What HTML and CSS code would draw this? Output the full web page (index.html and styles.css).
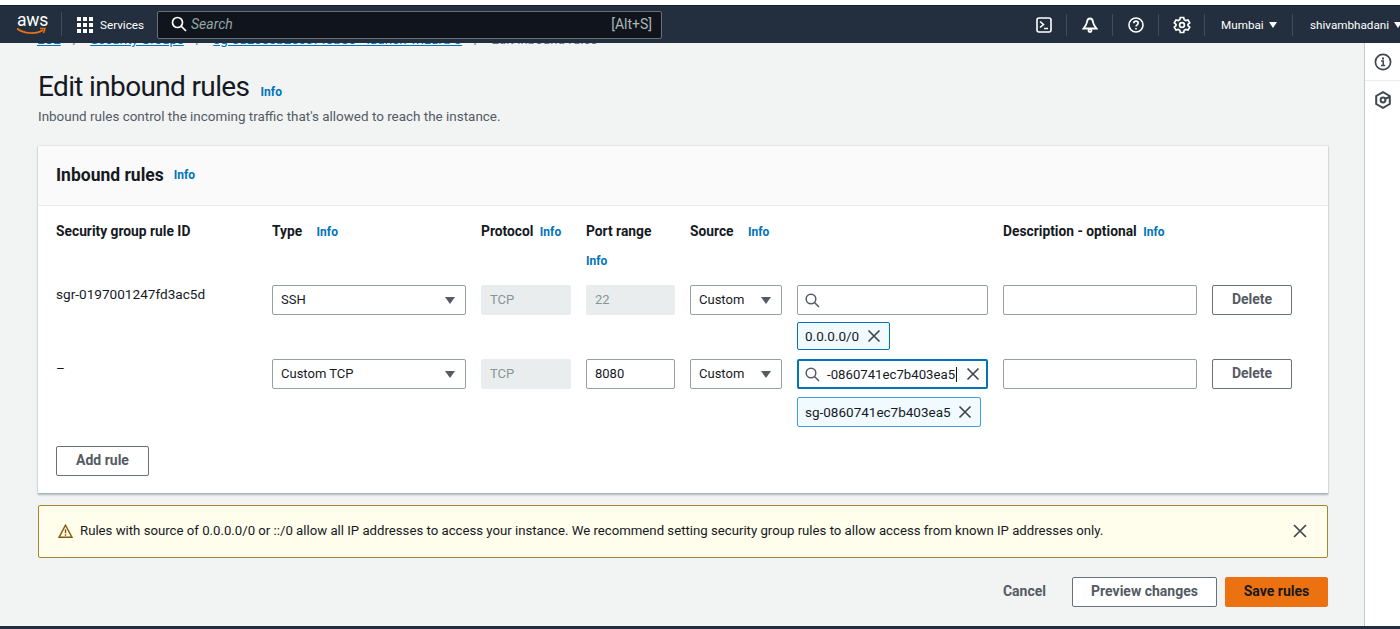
FILE: index.html
```html
<!DOCTYPE html>
<html lang="en">
<head>
    <meta charset="UTF-8">
    <meta name="viewport" content="width=device-width, initial-scale=1.0">
    <title>Edit inbound rules</title>
    <link rel="stylesheet" href="styles.css">
</head>
<body>

    <div class="top-strip"></div>

    <nav class="navbar">
        <a class="logo">
            <span class="logo-text">aws</span>
            <svg class="logo-smile" width="30" height="9" viewBox="0 0 30 9"><path d="M1 1.5C8 7 20 7.5 27 3" fill="none" stroke="#ec7211" stroke-width="1.7"/><path d="M24 1.5 29 1.5 27.5 6" fill="none" stroke="#ec7211" stroke-width="1.5"/></svg>
        </a>
        <a class="services">
            <svg width="16" height="16" viewBox="0 0 16 16" fill="#fff"><rect width="4" height="4"/><rect x="6" width="4" height="4"/><rect x="12" width="4" height="4"/><rect y="6" width="4" height="4"/><rect x="6" y="6" width="4" height="4"/><rect x="12" y="6" width="4" height="4"/><rect y="12" width="4" height="4"/><rect x="6" y="12" width="4" height="4"/><rect x="12" y="12" width="4" height="4"/></svg>
            Services
        </a>
        <div class="nav-search">
            <svg width="16" height="16" viewBox="0 0 16 16" fill="none" stroke="#fff" stroke-width="1.7"><circle cx="6.5" cy="6.5" r="5"/><path d="M10 10l5 5"/></svg>
            <span class="nav-search-text">Search</span>
            <span class="nav-search-key">[Alt+S]</span>
        </div>

        <div class="nav-right">
            <a class="nav-icon">
                <svg width="16" height="16" viewBox="0 0 16 16" fill="none" stroke="#fff" stroke-width="1.6"><rect x="1" y="1" width="14" height="14" rx="2"/><path d="M4 4.5 7.5 7.5 4 10.5M8 11.5h4"/></svg>
            </a>
            <a class="nav-icon">
                <svg width="16" height="16" viewBox="0 0 16 16" fill="none" stroke="#fff" stroke-width="1.8"><path d="M8 1.5C6 1.5 5.2 3.2 5 5 4.6 8 3 9.5 1.5 11.5h13C13 9.5 11.4 8 11 5 10.8 3.2 10 1.5 8 1.5Z"/><circle cx="8" cy="13.5" r="1.5"/></svg>
            </a>
            <a class="nav-icon">
                <svg width="16" height="16" viewBox="0 0 16 16" fill="none" stroke="#fff" stroke-width="1.6"><circle cx="8" cy="8" r="7"/><path d="M5.8 6.2C5.8 3.4 10.2 3.6 10.2 6c0 1.8-2.2 1.8-2.2 3.6"/><path d="M8 11v1.6"/></svg>
            </a>
            <a class="nav-icon">
                <svg width="18" height="18" viewBox="0 0 18 18" fill="none" stroke="#fff" stroke-width="1.7"><path d="M7.3 1.5h3.4l.5 2.2 1.6.9 2.2-.7 1.7 3-1.7 1.5v1.2l1.7 1.5-1.7 3-2.2-.7-1.6.9-.5 2.2H7.3l-.5-2.2-1.6-.9-2.2.7-1.7-3 1.7-1.5V8.4L1.3 6.9l1.7-3 2.2.7 1.6-.9Z"/><circle cx="9" cy="9" r="2.4"/></svg>
            </a>
            <a class="nav-menu nav-region">Mumbai <i class="caret-white"></i></a>
            <a class="nav-menu nav-user">shivambhadani <i class="caret-white"></i></a>
        </div>
    </nav>

    <div class="layout">
        <main class="content">

            <div class="breadcrumb">
                <a>EC2</a><span>/</span>
                <a>Security Groups</a><span>/</span>
                <a class="crumb-group">sg-0a2c5cb2ce3f40b5c - launch-wizard-3</a><span>/</span>
                <em>Edit inbound rules</em>
            </div>

            <h1 class="page-title">Edit inbound rules <a class="info">Info</a></h1>
            <p class="page-desc">Inbound rules control the incoming traffic that's allowed to reach the instance.</p>

            <section class="panel">
                <div class="panel-head">
                    <h2>Inbound rules</h2> <a class="info">Info</a>
                </div>

                <div class="panel-body">

                    <div class="rule-row rule-labels">
                        <div>Security group rule ID</div>
                        <div>Type <a class="info info-wide">Info</a></div>
                        <div>Protocol <a class="info">Info</a></div>
                        <div>Port range <a class="info info-block">Info</a></div>
                        <div>Source <a class="info info-wide">Info</a></div>
                        <div></div>
                        <div class="desc-label">Description - optional <a class="info">Info</a></div>
                        <div></div>
                    </div>

                    <div class="rule-row">
                        <div class="rule-id">sgr-0197001247fd3ac5d</div>
                        <div class="select">SSH <i class="caret"></i></div>
                        <div class="field disabled">TCP</div>
                        <div class="field disabled">22</div>
                        <div class="select">Custom <i class="caret"></i></div>
                        <div>
                            <div class="field search-field">
                                <svg class="search-icon" width="15" height="15" viewBox="0 0 15 15" fill="none" stroke="#545b64" stroke-width="1.5"><circle cx="6" cy="6" r="4.8"/><path d="M9.5 9.5l4.5 4.5"/></svg>
                            </div>
                            <div class="chip chip-first">0.0.0.0/0
                                <svg width="14" height="14" viewBox="0 0 14 14" fill="none" stroke="#414750" stroke-width="1.7"><path d="M1.5 1.5l11 11M12.5 1.5l-11 11"/></svg>
                            </div>
                        </div>
                        <div class="field"></div>
                        <button class="btn">Delete</button>
                    </div>

                    <div class="rule-row">
                        <div class="rule-id">–</div>
                        <div class="select">Custom TCP <i class="caret"></i></div>
                        <div class="field disabled">TCP</div>
                        <div class="field">8080</div>
                        <div class="select">Custom <i class="caret"></i></div>
                        <div>
                            <div class="field search-field focused">
                                <svg class="search-icon" width="15" height="15" viewBox="0 0 15 15" fill="none" stroke="#545b64" stroke-width="1.5"><circle cx="6" cy="6" r="4.8"/><path d="M9.5 9.5l4.5 4.5"/></svg>
                                <span class="typed">-0860741ec7b403ea5</span>
                                <svg class="clear-icon" width="14" height="14" viewBox="0 0 14 14" fill="none" stroke="#414750" stroke-width="1.7"><path d="M1.5 1.5l11 11M12.5 1.5l-11 11"/></svg>
                            </div>
                            <div class="chip chip-second">sg-0860741ec7b403ea5
                                <svg width="14" height="14" viewBox="0 0 14 14" fill="none" stroke="#414750" stroke-width="1.7"><path d="M1.5 1.5l11 11M12.5 1.5l-11 11"/></svg>
                            </div>
                        </div>
                        <div class="field"></div>
                        <button class="btn">Delete</button>
                    </div>

                    <button class="btn btn-add">Add rule</button>
                </div>
            </section>

            <div class="warning">
                <svg width="15" height="16" viewBox="0 0 16 16" fill="none" stroke="#8a5a0b" stroke-width="1.5"><path d="M8 1.8 1.2 14.6h13.6Z"/><path d="M8 6v4.5M8 11.5v1.6"/></svg>
                <span class="warning-text">Rules with source of 0.0.0.0/0 or ::/0 allow all IP addresses to access your instance. We recommend setting security group rules to allow access from known IP addresses only.</span>
                <svg class="warning-close" width="14" height="14" viewBox="0 0 14 14" fill="none" stroke="#414750" stroke-width="1.7"><path d="M1 1l12 12M13 1 1 13"/></svg>
            </div>

            <div class="actions">
                <a class="cancel">Cancel</a>
                <button class="btn btn-preview">Preview changes</button>
                <button class="btn btn-save">Save rules</button>
            </div>

        </main>

        <aside class="side-rail">
            <div class="rail-item">
                <svg width="18" height="18" viewBox="0 0 18 18" fill="none" stroke="#414750" stroke-width="1.7"><circle cx="9" cy="9" r="7.6"/><path d="M7 8h2.2v4.5M7 12.6h4.2" stroke-width="1.5"/><path d="M9 4.6v1.8" stroke-width="2"/></svg>
            </div>
            <div class="rail-item">
                <svg width="16" height="18" viewBox="0 0 16 18" fill="none" stroke="#414750" stroke-width="2"><path d="M8 1.2 14.8 5v8L8 16.8 1.2 13V5Z"/><circle cx="8" cy="9" r="2.4"/><path d="M9.5 8l5-2"/></svg>
            </div>
        </aside>
    </div>

    <div class="bottom-bar"></div>

</body>
</html>
```

FILE: styles.css
```css
* {
    box-sizing: border-box;
}

body {
    margin: 0;
    height: 629px;
    overflow: hidden;
    display: flex;
    flex-direction: column;
    background: #f2f3f3;
    color: #16191f;
    font-family: Roboto, "Liberation Sans", sans-serif;
    font-size: 14px;
    line-height: 18px;
}

button {
    font-family: inherit;
}

.top-strip {
    height: 5px;
    background: #fff;
}

/* top navigation */

.navbar {
    position: relative;
    z-index: 2;
    height: 38px;
    flex: none;
    display: flex;
    align-items: center;
    background: #232f3e;
    border-top: 1px solid #16202c;
    color: #fff;
    font-size: 11.7px;
}

.logo {
    width: 62px;
    height: 24px;
    margin-top: -1px;
    padding-left: 17px;
    position: relative;
    border-right: 1px solid #414c5a;
}

.logo-text {
    display: block;
    font-size: 17.5px;
    line-height: 17px;
    letter-spacing: -0.2px;
}

.logo-smile {
    position: absolute;
    left: 16px;
    top: 15px;
}

.services {
    display: flex;
    align-items: center;
    gap: 7px;
    margin-left: 15px;
    width: 80px;
}

.nav-search {
    width: 505px;
    height: 28px;
    display: flex;
    align-items: center;
    padding: 0 9px 1px 13px;
    background: #10151d;
    border: 1px solid #687078;
    border-radius: 2px;
}

.nav-search-text {
    margin-left: 4px;
    font-size: 14px;
    font-style: italic;
    color: #95a5a6;
}

.nav-search-key {
    margin-left: auto;
    font-size: 14px;
    color: #aab7b8;
}

.nav-right {
    margin-left: auto;
    display: flex;
    align-items: center;
}

.nav-icon {
    width: 46px;
    height: 22px;
    display: flex;
    align-items: center;
    justify-content: center;
    border-right: 1px solid #414c5a;
}

.nav-menu {
    height: 22px;
    display: flex;
    align-items: center;
    gap: 5px;
}

.nav-region {
    width: 88px;
    padding-left: 16px;
    border-right: 1px solid #414c5a;
}

.nav-user {
    width: 107px;
    padding-left: 17px;
}

.caret-white {
    width: 0;
    height: 0;
    border-left: 4.5px solid transparent;
    border-right: 4.5px solid transparent;
    border-top: 6px solid #fff;
}

/* page layout */

.layout {
    flex: 1;
    display: flex;
    min-height: 0;
}

.content {
    width: 1364px;
    padding: 0 36px 0 38px;
}

.side-rail {
    width: 36px;
    background: #fff;
    border-left: 1px solid #c5cbcc;
}

.rail-item {
    display: flex;
    justify-content: center;
    padding-top: 10px;
    height: 38px;
    border-bottom: 1px solid #eaeded;
}

.rail-item + .rail-item {
    border-bottom: 0;
    padding-top: 10px;
}

.bottom-bar {
    height: 3px;
    flex: none;
    background: #232f3e;
}

.breadcrumb {
    height: 18px;
    margin-top: -12px;
    margin-left: -1px;
    display: flex;
    align-items: center;
    white-space: nowrap;
    font-size: 13.3px;
}

.breadcrumb a {
    color: #0073bb;
    text-decoration: underline;
}

.breadcrumb span {
    margin: 0 12px;
    color: #687078;
}

.breadcrumb .crumb-group {
    letter-spacing: 0.15px;
}

.breadcrumb em {
    font-style: normal;
    color: #687078;
}

.page-title {
    margin: 20px 0 0;
    font-size: 28px;
    font-weight: 400;
    line-height: 36px;
    letter-spacing: -0.65px;
}

.page-desc {
    margin: -2px 0 0;
    color: #545b64;
    font-size: 13.45px;
    line-height: 18px;
}

.info {
    color: #0073bb;
    font-size: 12px;
    font-weight: 700;
    letter-spacing: 0;
    margin-left: 3px;
}

.page-title .info {
    margin-left: 5px;
}

.info-wide {
    margin-left: 11px;
}

.info-block {
    display: block;
    margin: 12px 0 0;
}

/* rules panel */

.panel {
    margin-top: 20px;
    height: 348px;
    background: #fff;
    border-bottom: 1px solid #aab7b8;
    box-shadow: 0 1px 2px rgba(0, 28, 36, .25), 0 0 1px rgba(0, 28, 36, .25);
}

.panel-head {
    height: 60px;
    display: flex;
    align-items: center;
    padding: 0 0 2px 18px;
    gap: 7px;
    background: #fafafa;
    border-bottom: 1px solid #eaeded;
}

.panel-head h2 {
    margin: 0;
    font-size: 17.5px;
    font-weight: 700;
}

.panel-body {
    padding: 16px 18px 0;
}

.rule-row {
    display: grid;
    grid-template-columns: 201px 194px 90px 89px 92px 191px 194px 80px;
    column-gap: 15px;
    margin-bottom: 9px;
    align-items: start;
}

.rule-labels {
    height: 63px;
    margin-bottom: 0;
    font-size: 13.8px;
    font-weight: 700;
}

.desc-label {
    white-space: nowrap;
}

.rule-id {
    font-size: 13.6px;
}

/* form controls */

.select,
.field {
    height: 30px;
    display: flex;
    align-items: center;
    padding: 0 8px;
    background: #fff;
    border: 1px solid #95a0a1;
    border-radius: 2px;
    font-size: 13px;
}

.select {
    justify-content: space-between;
    padding-right: 10px;
}

.caret {
    width: 0;
    height: 0;
    border-left: 5px solid transparent;
    border-right: 5px solid transparent;
    border-top: 7px solid #545b64;
}

.disabled {
    background: #eaeded;
    border-color: #eaeded;
    color: #879596;
}

.search-field {
    padding: 0 7px;
}

.focused {
    border: 2px solid #0073bb;
    padding: 0 6px;
    font-size: 13.2px;
}

.typed {
    margin-left: 7px;
    padding-right: 1px;
    border-right: 1px solid #16191f;
    line-height: 15px;
}

.clear-icon {
    margin-left: auto;
}

.chip {
    margin-top: 7px;
    display: flex;
    align-items: center;
    justify-content: space-between;
    padding: 0 8px 0 7px;
    background: #f1faff;
    border: 1px solid #0073bb;
    border-radius: 2px;
    font-size: 13.5px;
}

.chip-first {
    width: 93px;
    height: 28px;
}

.chip-second {
    width: 184px;
    height: 30px;
    margin-top: 8px;
    border-color: #44a0dc;
}

.btn {
    height: 30px;
    padding: 0 0 2px;
    background: #fff;
    border: 1px solid #687078;
    border-radius: 2px;
    color: #545b64;
    font-size: 14px;
    font-weight: 700;
}

.btn-add {
    display: block;
    width: 93px;
    margin-top: 19px;
}

/* warning + footer actions */

.warning {
    margin-top: 11px;
    height: 53px;
    display: flex;
    align-items: center;
    padding: 0 20px 2px 19px;
    background: #fffdeb;
    border: 1px solid #a8842f;
    border-radius: 2px;
}

.warning-text {
    margin-left: 7px;
    font-size: 13.2px;
}

.warning-close {
    margin-left: auto;
}

.actions {
    margin-top: 19px;
    display: flex;
    justify-content: flex-end;
    align-items: center;
}

.cancel {
    margin-right: 26px;
    padding-bottom: 2px;
    color: #545b64;
    font-size: 14px;
    font-weight: 700;
}

.btn-preview {
    width: 145px;
    margin-right: 8px;
}

.btn-save {
    width: 103px;
    background: #ec7211;
    border-color: #ec7211;
    color: #16191f;
}
```
